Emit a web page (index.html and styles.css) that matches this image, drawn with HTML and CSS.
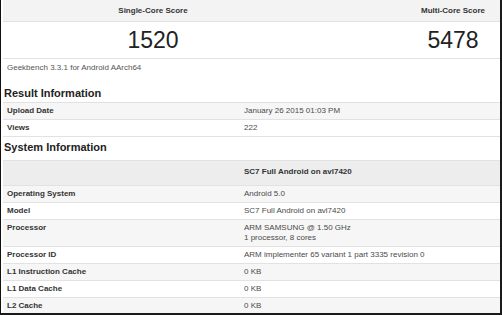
FILE: index.html
```html
<!DOCTYPE html>
<html lang="en">
<head>
    <meta charset="UTF-8" />
    <link rel="stylesheet" href="styles.css">
</head>
<body>
    <main class="frame">
        <section class="scores">
            <div class="scores__head">Single-Core Score</div>
            <div class="scores__head">Multi-Core Score</div>
            <div class="scores__value">1520</div>
            <div class="scores__value">5478</div>
        </section>
        <p class="platform">Geekbench 3.3.1 for Android AArch64</p>

        <h2 class="section-title section-title--result">Result Information</h2>
        <div class="info">
            <div class="info__row"><span class="info__label">Upload Date</span><span class="info__value">January 26 2015 01:03 PM</span></div>
            <div class="info__row"><span class="info__label">Views</span><span class="info__value">222</span></div>
        </div>

        <h2 class="section-title section-title--system">System Information</h2>
        <div class="info">
            <div class="info__row info__row--head"><span class="info__label"></span><span class="info__value">SC7 Full Android on avl7420</span></div>
            <div class="info__row"><span class="info__label">Operating System</span><span class="info__value">Android 5.0</span></div>
            <div class="info__row"><span class="info__label">Model</span><span class="info__value">SC7 Full Android on avl7420</span></div>
            <div class="info__row"><span class="info__label">Processor</span><span class="info__value">ARM SAMSUNG @ 1.50 GHz<br>1 processor, 8 cores</span></div>
            <div class="info__row"><span class="info__label">Processor ID</span><span class="info__value">ARM implementer 65 variant 1 part 3335 revision 0</span></div>
            <div class="info__row"><span class="info__label">L1 Instruction Cache</span><span class="info__value">0 KB</span></div>
            <div class="info__row"><span class="info__label">L1 Data Cache</span><span class="info__value">0 KB</span></div>
            <div class="info__row"><span class="info__label">L2 Cache</span><span class="info__value">0 KB</span></div>
        </div>
    </main>
</body>
</html>
```

FILE: styles.css
```css
html, body {
    margin: 0;
    padding: 0;
    background-color: #fff;
    font-family: "Liberation Sans", Arial, sans-serif;
}
* {
    box-sizing: border-box;
}
.frame {
    width: 502px;
    height: 315px;
    overflow: hidden;
    padding-left: 2px;
    border-left: 1px solid #111;
    border-right: 2px solid #1a1a1a;
    border-bottom: 2px solid #1a1a1a;
    background-color: #fff;
}
.scores {
    display: grid;
    grid-template-columns: 300px 300px;
    width: 600px;
}
.scores__head {
    height: 22px;
    line-height: 21px;
    background-color: #f3f3f3;
    border-bottom: 1px solid #e2e2e2;
    text-align: center;
    font-size: 8px;
    font-weight: bold;
    color: #333;
}
.scores__value {
    height: 37px;
    line-height: 36px;
    border-bottom: 1px solid #e2e2e2;
    text-align: center;
    font-size: 23px;
    color: #222;
}
.platform {
    margin: 0;
    padding: 3px 4px;
    line-height: 11px;
    font-size: 8px;
    color: #555;
}
.section-title {
    margin: 0;
    padding-left: 1px;
    font-size: 11px;
    line-height: 13px;
    font-weight: bold;
    color: #222;
}
.section-title--result {
    margin-top: 11px;
    margin-bottom: 2px;
}
.section-title--system {
    margin-top: 4px;
    margin-bottom: 6px;
}
.info {
    width: 600px;
    border-bottom: 1px solid #e2e2e2;
}
.info__row {
    display: grid;
    grid-template-columns: 237px 1fr;
    border-top: 1px solid #e2e2e2;
    font-size: 8px;
    line-height: 10px;
}
.info__row:nth-child(odd) {
    background-color: #f6f6f6;
}
.info__label,
.info__value {
    padding: 3px 4px;
}
.info__label {
    font-weight: bold;
    color: #333;
}
.info__value {
    color: #4a4a4a;
}
.info__row--head {
    background-color: #ededed !important;
}
.info__row--head .info__label,
.info__row--head .info__value {
    padding-top: 6px;
    padding-bottom: 8px;
}
.info__row--head .info__value {
    font-weight: bold;
    color: #333;
}
.info__row--head + .info__row {
    background-color: #f6f6f6;
}
.info__row--head ~ .info__row:nth-child(odd) {
    background-color: #fff;
}
.info__row--head ~ .info__row:nth-child(even) {
    background-color: #f6f6f6;
}
```
